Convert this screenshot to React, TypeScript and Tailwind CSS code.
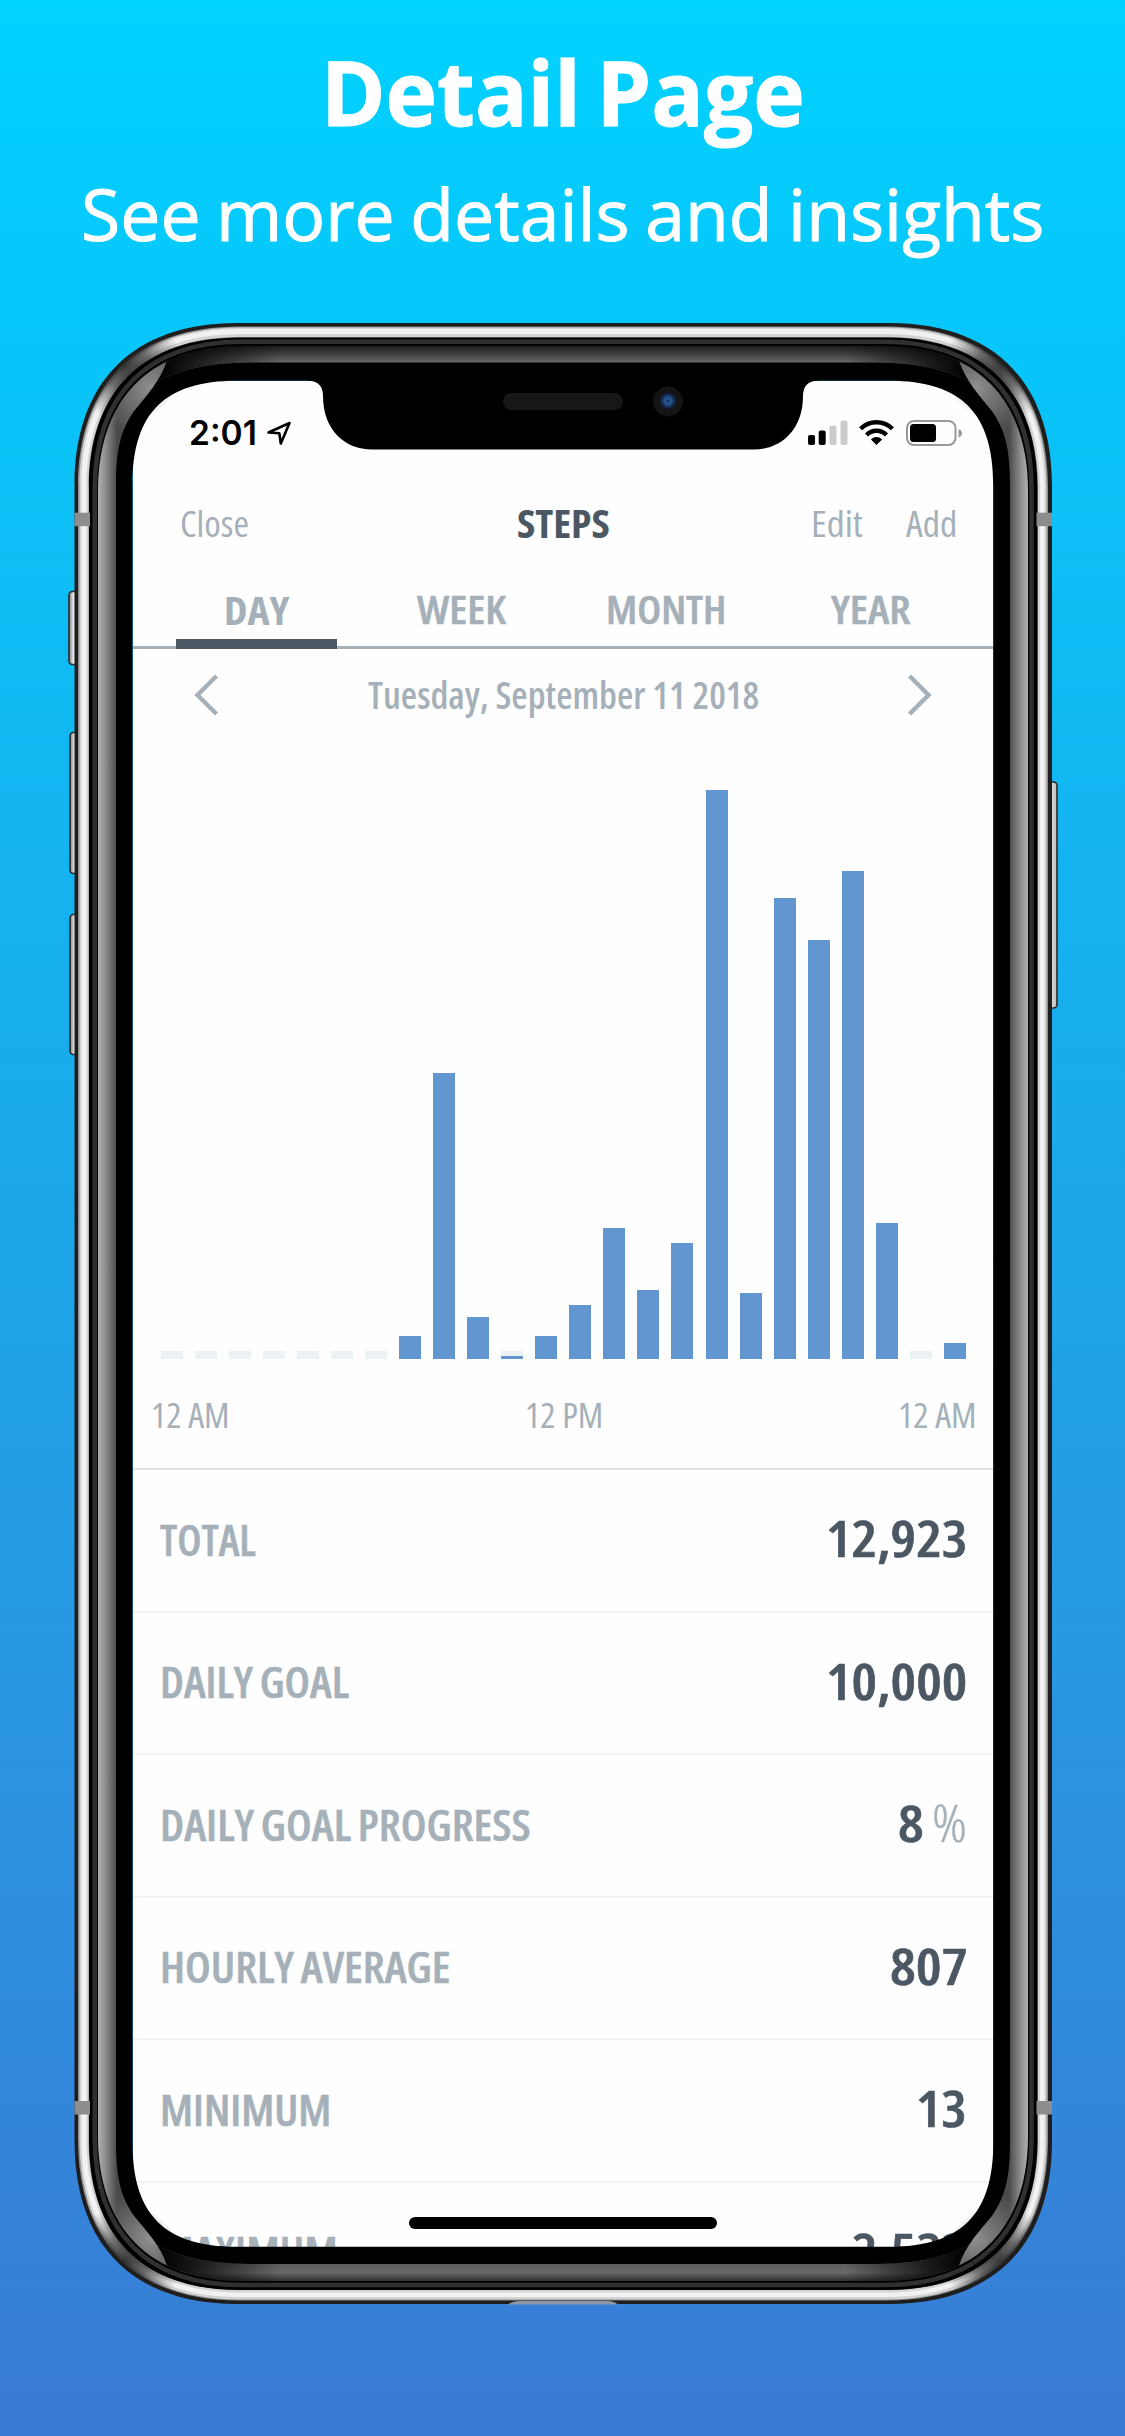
import { useLayoutEffect, useRef, useState } from "react";
import type { ReactNode } from "react";

type FitProps = {
  width: number;
  className?: string;
  children: ReactNode;
};

// Squeezes a line of text horizontally until it fills the given width.
function Fit({ width, className = "", children }: FitProps) {
  const ref = useRef<HTMLSpanElement>(null);
  const [scale, setScale] = useState(1);

  useLayoutEffect(() => {
    if (ref.current) setScale(width / ref.current.offsetWidth);
  }, [width]);

  return (
    <span className="block shrink-0" style={{ width }}>
      <span
        ref={ref}
        className={`inline-block origin-left whitespace-nowrap font-stretch-condensed ${className}`}
        style={{ transform: `scaleX(${scale})` }}
      >
        {children}
      </span>
    </span>
  );
}

const tabs = [
  { label: "DAY", width: 65, active: true },
  { label: "WEEK", width: 89 },
  { label: "MONTH", width: 120 },
  { label: "YEAR", width: 79 },
];

// Bar heights in px, one per hour. 0 means no steps were recorded.
const hours = [
  0, 0, 0, 0, 0, 0, 0, 23.5, 286.5, 42, 3, 23.5, 54.5, 131.5, 69.5, 116.5, 569.5, 66.5, 461, 419, 488, 136, 0, 16.5,
];

const stats = [
  { label: "TOTAL", labelWidth: 96, value: "12,923", valueWidth: 141 },
  { label: "DAILY GOAL", labelWidth: 189, value: "10,000", valueWidth: 141 },
  { label: "DAILY GOAL PROGRESS", labelWidth: 371, value: "8", valueWidth: 26, unit: "%" },
  { label: "HOURLY AVERAGE", labelWidth: 291, value: "807", valueWidth: 77 },
  { label: "MINIMUM", labelWidth: 171, value: "13", valueWidth: 51 },
  { label: "MAXIMUM", labelWidth: 178, value: "2,533", valueWidth: 115 },
];

function StatusBar() {
  return (
    <div className="flex h-[104px] items-center justify-between pr-[31px] pl-[56px]">
      <div className="flex items-center gap-[9px]">
        <span className="font-['Inter',sans-serif] text-[34px] leading-none font-semibold">
          <Fit width={68}>2:01</Fit>
        </span>
        <svg width="26" height="26" viewBox="0 0 26 26" fill="none" className="-mt-px">
          <path d="M2.5 12.5 L23.5 3 L14.8 23.5 L13.3 13.2 Z" stroke="#000" strokeWidth="2.6" strokeLinejoin="round" />
        </svg>
      </div>
      <svg width="156" height="28" viewBox="0 0 156 28">
        <rect x="2" y="16" width="7" height="10" rx="2" />
        <rect x="12.7" y="11.5" width="7" height="14.5" rx="2" />
        <rect x="23.5" y="6.5" width="7" height="19.5" rx="2" fill="#cbcbcb" />
        <rect x="34.5" y="1.5" width="7" height="24.5" rx="2" fill="#cbcbcb" />
        <g fill="none" stroke="#000" strokeWidth="4.4">
          <path d="M54.6 9.8 A22.5 22.5 0 0 1 86.4 9.8" />
          <path d="M60.5 16 A14 14 0 0 1 80.5 16" />
        </g>
        <path d="M70.5 26 L64.9 20.4 A8 8 0 0 1 76.1 20.4 Z" />
        <rect x="101" y="2" width="48.5" height="24" rx="7" fill="none" stroke="#999" strokeWidth="2" />
        <rect x="104" y="5" width="26" height="18" rx="3.5" />
        <path d="M152.5 10 Q156 11.5 156 14.2 Q156 17 152.5 18.5 Z" fill="#999" />
      </svg>
    </div>
  );
}

function NavBar() {
  return (
    <div className="grid h-[77px] grid-cols-3 items-center pr-[36px] pb-[2px] pl-[47px] text-[37px] leading-[40px] text-[#a5b0b9]">
      <Fit width={69}>Close</Fit>
      <div className="flex justify-center pr-[11px] text-[40px] font-bold text-[#4b5763]">
        <Fit width={93}>STEPS</Fit>
      </div>
      <div className="flex justify-end gap-[43px]">
        <Fit width={52}>Edit</Fit>
        <Fit width={51}>Add</Fit>
      </div>
    </div>
  );
}

function Tabs() {
  return (
    <div className="flex h-[87px] border-b-[3px] border-[#a5b0b9] pr-[20px] pl-[21px]">
      {tabs.map((tab) => (
        <div
          key={tab.label}
          className={`relative flex flex-1 justify-center text-[40px] leading-[40px] text-[#a5b0b9] ${
            tab.active ? "pt-[28px] font-bold" : "pt-[27px] font-semibold [-webkit-text-stroke:0.5px_#a5b0b9]"
          }`}
        >
          <Fit width={tab.width}>{tab.label}</Fit>
          {tab.active && <div className="absolute -bottom-[3px] left-[22px] h-[10px] w-[161px] bg-[#4b5763]" />}
        </div>
      ))}
    </div>
  );
}

function DateRow() {
  return (
    <div className="flex h-[94px] items-center justify-between px-[60px] pb-[2px] text-[37px] leading-[40px] font-semibold text-[#a5b0b9]">
      <svg width="26" height="42" viewBox="0 0 26 42" fill="none" stroke="#a5b0b9" strokeWidth="4.4">
        <path d="M23.5 2 L4.5 21 L23.5 40" />
      </svg>
      <Fit width={391}>Tuesday, September 11 2018</Fit>
      <svg width="26" height="42" viewBox="0 0 26 42" fill="none" stroke="#a5b0b9" strokeWidth="4.4">
        <path d="M2.5 2 L21.5 21 L2.5 40" />
      </svg>
    </div>
  );
}

function Chart() {
  return (
    <>
      <div className="flex h-[616px] items-end justify-between pr-[27px] pl-[28px]">
        {hours.map((height, i) => (
          <div key={i} className="flex h-full w-[22px] flex-col justify-end">
            {height < 8 && <div className="bg-[#ecf1f4]" style={{ height: 8 - height }} />}
            <div className="bg-[#6196d0]" style={{ height }} />
          </div>
        ))}
      </div>
      <div className="flex h-[109px] items-center justify-between pt-[3px] pr-[17px] pl-[18px] text-[34px] leading-[40px] text-[#a5b0b9]">
        <Fit width={78}>12 AM</Fit>
        <Fit width={78}>12 PM</Fit>
        <Fit width={78}>12 AM</Fit>
      </div>
    </>
  );
}

function Stats() {
  return (
    <div className="border-t-2 border-[#dfe3e6]">
      {stats.map((stat) => (
        <div
          key={stat.label}
          className="flex h-[142.5px] items-center justify-between border-b-2 border-[#f0f3f5] pr-[26px] pb-[3px] pl-[27px]"
        >
          <div className="text-[44px] leading-[60px] font-semibold text-[#a5b0b9] [-webkit-text-stroke:0.5px_#a5b0b9]">
            <Fit width={stat.labelWidth} className="[word-spacing:-1.5px]">
              {stat.label}
            </Fit>
          </div>
          <div className="-mt-[3px] flex gap-[8px] text-[51px] leading-[60px] font-semibold text-[#4b5763] [-webkit-text-stroke:0.6px_#4b5763]">
            <Fit width={stat.valueWidth}>{stat.value}</Fit>
            {stat.unit && (
              <span className="font-light text-[#a5b0b9] [-webkit-text-stroke:0.4px_#a5b0b9]">
                <Fit width={35}>{stat.unit}</Fit>
              </span>
            )}
          </div>
        </div>
      ))}
    </div>
  );
}

// Rounded rectangle with continuous corners: e is the corner extent, k the handle length.
function squircle(x0: number, y0: number, x1: number, y1: number, e: number, k = 0.64) {
  const c = e * (1 - k);
  return [
    `M${x0} ${y0 + e}`,
    `C${x0} ${y0 + c} ${x0 + c} ${y0} ${x0 + e} ${y0}`,
    `L${x1 - e} ${y0}`,
    `C${x1 - c} ${y0} ${x1} ${y0 + c} ${x1} ${y0 + e}`,
    `L${x1} ${y1 - e}`,
    `C${x1} ${y1 - c} ${x1 - c} ${y1} ${x1 - e} ${y1}`,
    `L${x0 + e} ${y1}`,
    `C${x0 + c} ${y1} ${x0} ${y1 - c} ${x0} ${y1 - e}`,
    "Z",
  ].join(" ");
}

const screenPath = squircle(132.5, 380.7, 993.3, 2246.7, 104, 0.69);
const notchPath =
  "M308 378 L308 380.7 Q323 381 323 396 C323 430 345 449.5 372 449.5 L754 449.5 C781 449.5 803 430 803 396 Q803 381 818 380.7 L818 378 Z";
const silverPath = squircle(78, 326.5, 1048, 2300.5, 161);
const sheenPath =
  "M98 320 L167.5 359 C160 382 146 396 134 411 C121 430 116 448 116 485 L116 2142 C116 2178 121 2197 134 2216 C146 2231 160 2244 167.5 2267 L98 2300 Z";
const topPath = "M140 392 Q180 362.5 250 362.5 L876 362.5 Q946 362.5 986 392 L986 346 L140 346 Z";
const bottomPath = "M140 2235 Q180 2264 250 2264 L876 2264 Q946 2264 986 2235 L986 2281 L140 2281 Z";

function SideSheen() {
  return (
    <>
      <path d={sheenPath} fill="url(#side)" />
      <path d={sheenPath} fill="url(#glowTop)" />
      <path d={sheenPath} fill="url(#glowBottom)" />
    </>
  );
}

function Bezel() {
  return (
    <svg
      viewBox="60 310 1010 2010"
      width="1010"
      height="2010"
      className="pointer-events-none absolute top-0 left-0"
      aria-hidden="true"
    >
      <defs>
        <linearGradient id="side" gradientUnits="userSpaceOnUse" x1="98" x2="117" y1="0" y2="0">
          <stop offset="0" stopColor="#b0b0b0" />
          <stop offset="0.35" stopColor="#919191" />
          <stop offset="1" stopColor="#4a4a4a" />
        </linearGradient>
        <radialGradient id="glowTop" gradientUnits="userSpaceOnUse" cx="150" cy="388" r="52">
          <stop offset="0" stopColor="#909090" />
          <stop offset="0.5" stopColor="#7a7a7a" stopOpacity="0.7" />
          <stop offset="1" stopColor="#777" stopOpacity="0" />
        </radialGradient>
        <radialGradient id="glowBottom" gradientUnits="userSpaceOnUse" cx="150" cy="2239" r="52">
          <stop offset="0" stopColor="#909090" />
          <stop offset="0.5" stopColor="#7a7a7a" stopOpacity="0.7" />
          <stop offset="1" stopColor="#777" stopOpacity="0" />
        </radialGradient>
        <linearGradient id="top" gradientUnits="userSpaceOnUse" x1="0" x2="0" y1="346" y2="362.5">
          <stop offset="0" stopColor="#1c1c1c" />
          <stop offset="1" stopColor="#686868" />
        </linearGradient>
        <linearGradient id="bottom" gradientUnits="userSpaceOnUse" x1="0" x2="0" y1="2264" y2="2281">
          <stop offset="0" stopColor="#5c5c5c" />
          <stop offset="0.5" stopColor="#6a6a6a" />
          <stop offset="1" stopColor="#303030" />
        </linearGradient>
        <linearGradient id="ends" gradientUnits="userSpaceOnUse" x1="160" x2="966" y1="0" y2="0">
          <stop offset="0" stopColor="#000" />
          <stop offset="0.05" stopColor="#000" stopOpacity="0.7" />
          <stop offset="0.15" stopColor="#000" stopOpacity="0" />
          <stop offset="0.85" stopColor="#000" stopOpacity="0" />
          <stop offset="0.95" stopColor="#000" stopOpacity="0.7" />
          <stop offset="1" stopColor="#000" />
        </linearGradient>
        <radialGradient id="shade">
          <stop offset="0" stopColor="#1a1a1a" stopOpacity="0.85" />
          <stop offset="0.4" stopColor="#222" stopOpacity="0.65" />
          <stop offset="1" stopColor="#333" stopOpacity="0" />
        </radialGradient>
        <linearGradient id="button" x1="0" x2="1" y1="0" y2="0">
          <stop offset="0" stopColor="#777" />
          <stop offset="0.35" stopColor="#e8e8e8" />
          <stop offset="1" stopColor="#bdbdbd" />
        </linearGradient>
        <radialGradient id="lens">
          <stop offset="0" stopColor="#12294f" />
          <stop offset="0.35" stopColor="#2b5896" />
          <stop offset="0.7" stopColor="#17305a" />
          <stop offset="1" stopColor="#10141d" />
        </radialGradient>
        <clipPath id="silver">
          <path d={silverPath} />
        </clipPath>
        <clipPath id="glass">
          <path d={squircle(98, 346, 1028, 2281, 145)} />
        </clipPath>
      </defs>

      {/* side buttons */}
      <g fill="url(#button)" stroke="#2a2a2a" strokeWidth="1.6">
        <rect x="69" y="591.5" width="12" height="73" rx="3.5" />
        <rect x="70" y="732.5" width="12" height="141" rx="3.5" />
        <rect x="70" y="914.5" width="12" height="140" rx="3.5" />
        <rect x="1044" y="782" width="13" height="226" rx="3.5" />
      </g>

      {/* steel band and black rim */}
      <path
        fillRule="evenodd"
        fill="#1e1e1e"
        d={`${squircle(74.5, 323, 1052, 2304, 163)} ${squircle(88, 337, 1038, 2290, 152)}`}
      />
      <path fillRule="evenodd" fill="#8f8f8f" d={`${silverPath} ${squircle(89.5, 338, 1037, 2289.5, 150)}`} />
      <path
        fillRule="evenodd"
        fill="#d4d4d4"
        d={`${squircle(79.5, 327.5, 1046.5, 2299.5, 160)} ${squircle(88.5, 337, 1038, 2290, 151)}`}
      />
      <path
        fillRule="evenodd"
        fill="#f2f2f2"
        d={`${squircle(81.5, 329, 1044.5, 2297, 158)} ${squircle(86.5, 334, 1040, 2292.5, 153)}`}
      />
      <g clipPath="url(#silver)" fill="url(#shade)">
        <circle cx="126" cy="366" r="56" />
        <circle cx="1000" cy="366" r="56" />
        <circle cx="126" cy="2261" r="56" />
        <circle cx="1000" cy="2261" r="56" />
      </g>
      <path fillRule="evenodd" fill="#000" d={`${squircle(89, 337.5, 1037.5, 2290, 150)} ${screenPath}`} />
      <path d={squircle(94.8, 341.7, 1031.5, 2285, 147)} fill="none" stroke="#303030" strokeWidth="4.6" />

      {/* glass reflections */}
      <g clipPath="url(#glass)">
        <path d={topPath} fill="url(#top)" />
        <path d={topPath} fill="url(#ends)" />
        <path d={bottomPath} fill="url(#bottom)" />
        <path d={bottomPath} fill="url(#ends)" />
        <SideSheen />
        <g transform="translate(1126 0) scale(-1 1)">
          <SideSheen />
        </g>
      </g>

      {/* antenna bands */}
      <g fill="#8d8d8d">
        <rect x="74.5" y="512.7" width="15.5" height="13.5" />
        <rect x="1036.5" y="512.7" width="15.5" height="13.5" />
        <rect x="74.5" y="2101" width="15.5" height="13.5" />
        <rect x="1036.5" y="2101" width="15.5" height="13.5" />
      </g>
      <path d="M508 2304.5 Q512 2301 520 2301 L608 2301 Q614 2301 618 2304.5 Z" fill="#8b97a6" />

      {/* notch */}
      <path d={notchPath} />
      <rect x="503" y="393" width="120" height="17" rx="8.5" fill="#171717" />
      <circle cx="668" cy="401.5" r="15" fill="#141414" />
      <circle cx="668" cy="401" r="8.5" fill="url(#lens)" />
    </svg>
  );
}

export default function App() {
  return (
    <main className="flex h-[2436px] w-[1125px] flex-col overflow-hidden bg-linear-to-b/srgb from-[#00d2ff] to-[#3a7bd5] font-['Open_Sans',sans-serif]">
      <header className="flex h-[310px] flex-col items-center pt-[42px] text-white">
        <h1 className="text-[89px] leading-[100px] font-bold">
          <Fit width={484} className="font-stretch-normal [word-spacing:-7px] [-webkit-text-stroke:1px_white]">
            Detail Page
          </Fit>
        </h1>
        <h2 className="mt-[22px] text-[71px] leading-[100px] font-medium">
          <Fit width={963} className="font-stretch-normal [word-spacing:-3px] [-webkit-text-stroke:1px_white]">
            See more details and insights
          </Fit>
        </h2>
      </header>

      <section className="relative ml-[60px] h-[2010px] w-[1010px] pt-[71px] pl-[73px]">
        <div className="relative h-[1866px] w-[860px] overflow-hidden rounded-[78px] bg-[#fefefe]">
          <StatusBar />
          <NavBar />
          <Tabs />
          <DateRow />
          <Chart />
          <Stats />
          <div className="absolute bottom-[18px] left-1/2 h-[12px] w-[308px] -translate-x-1/2 rounded-full bg-black" />
        </div>
        <Bezel />
      </section>
    </main>
  );
}
